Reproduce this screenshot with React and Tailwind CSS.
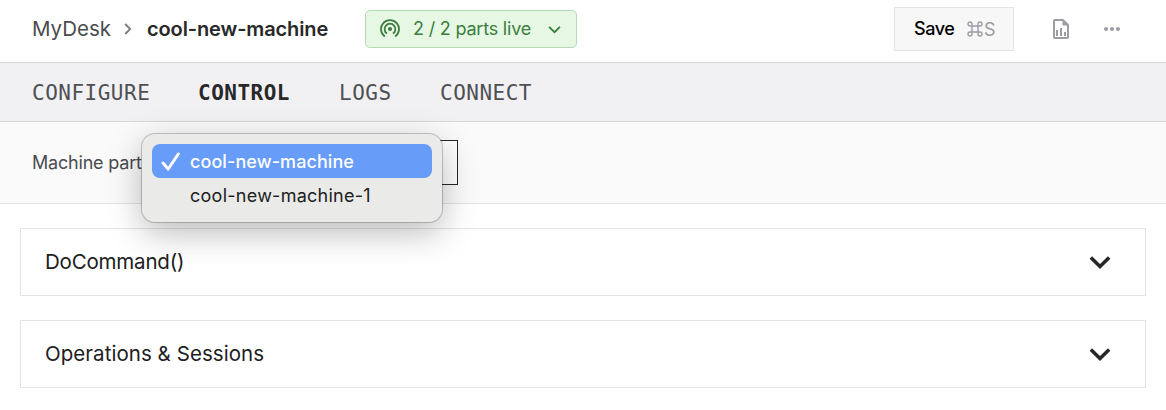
import React from "react";

function Chevron({ className, stroke = 2 }) {
  return (
    <svg className={className} viewBox="0 0 24 24" fill="none" stroke="currentColor" strokeWidth={stroke}>
      <path d="M2 7l10 10 10-10" />
    </svg>
  );
}

function Panel({ title, spacing }) {
  return (
    <section className="flex h-[68px] items-center justify-between border border-[#e4e4e6] pr-[34px] pl-6">
      <h2 className={"text-[20.5px] leading-6 whitespace-nowrap text-[#202021] " + spacing}>{title}</h2>
      <Chevron className="h-[22px] w-[22px] text-[#282829]" stroke={3.8} />
    </section>
  );
}

export default function App() {
  return (
    <div className="h-[410px] w-[1166px] overflow-hidden bg-white font-['Inter',sans-serif]">
      <header className="flex h-[63px] items-start border-b border-[#d7d7d9] pl-8">
        <div className="flex h-[58px] items-center">
          <span className="w-[92px] text-[20.5px] leading-6 text-[#4a4b4e]">MyDesk</span>
          <svg className="h-3 w-2 text-[#7a7c80]" viewBox="0 0 8 12" fill="none" stroke="currentColor" strokeWidth="1.8">
            <path d="M1.2 1l5 5-5 5" />
          </svg>
          <span className="ml-[15px] w-[218px] text-xl leading-6 font-semibold tracking-[-0.12px] whitespace-nowrap text-[#282829]">cool-new-machine</span>
        </div>
        <div className="mt-[10px] flex h-[38px] w-[212px] shrink-0 items-center rounded-[5px] border border-[#b5d9b5] bg-[#e6f8e4] pl-[14px] text-[#3d7d3f]">
          <svg className="h-5 w-5" viewBox="0 0 20 20" fill="none" stroke="currentColor" strokeWidth="1.8">
            <circle cx="10" cy="10" r="2.1" fill="currentColor" stroke="none" />
            <path d="M7 14.6a5.4 5.4 0 1 1 6 0" />
            <path d="M4.8 17.4a9 9 0 1 1 10.4 0" />
          </svg>
          <span className="ml-[13px] w-[121px] text-lg leading-6 tracking-[-0.2px] whitespace-nowrap">2 / 2 parts live</span>
          <Chevron className="ml-[14px] h-[13px] w-[13px]" stroke={3.4} />
        </div>
        <button className="mt-[7px] ml-[317px] flex h-11 w-[120px] items-center border border-[#e4e4e6] bg-[#f7f7f8] pl-[19px]">
          <span className="w-[53px] text-left text-lg leading-6 font-medium tracking-[-0.4px] text-black">Save</span>
          <svg className="h-4 w-4 text-[#9c9ca4]" viewBox="0 0 16 16" fill="none" stroke="currentColor" strokeWidth="1.4">
            <path d="M5 5h6v6H5zM5 5H3a2 2 0 1 1 2-2zM11 5V3a2 2 0 1 1 2 2zM11 11h2a2 2 0 1 1-2 2zM5 11v2a2 2 0 1 1-2-2z" />
          </svg>
          <span className="ml-px pt-px text-lg leading-6 text-[#9c9ca4]">S</span>
        </button>
        <svg className="mt-[19px] ml-[39px] h-5 w-4 text-[#9c9ca4]" viewBox="0 0 16 20" fill="none" stroke="currentColor" strokeWidth="2">
          <path d="M1 2a1 1 0 0 1 1-1h8l5 5v12a1 1 0 0 1-1 1H2a1 1 0 0 1-1-1z" />
          <path d="M9.5 1v5.5H15z" fill="currentColor" stroke="none" />
          <path d="M4 17v-6M8 17V9M12 17v-4" />
        </svg>
        <svg className="mt-[27px] ml-[35px] h-1 w-4 text-[#9c9ca4]" viewBox="0 0 16 4" fill="currentColor">
          <circle cx="2" cy="2" r="2" />
          <circle cx="8" cy="2" r="2" />
          <circle cx="14" cy="2" r="2" />
        </svg>
      </header>

      <nav className="flex h-[59px] items-center border-b border-[#d7d7d9] bg-[#f1f1f4] pt-px pl-8 font-['DejaVu_Sans_Mono',monospace] text-[21px] leading-6 tracking-[0.5px] text-[#4e4f52]">
        <a className="w-[166px]">CONFIGURE</a>
        <a className="w-[141px] font-bold text-[#282829]">CONTROL</a>
        <a className="w-[101px]">LOGS</a>
        <a>CONNECT</a>
      </nav>

      <div className="relative flex h-[82px] items-center border-b border-[#e4e4e6] bg-[#fafafa] pl-8">
        <label className="w-[125px] text-lg leading-6 tracking-[-0.2px] whitespace-nowrap text-[#4a4b4e]">Machine part</label>
        <div className="h-[45px] w-[301px] border border-[#282829] bg-white" />
        <div className="absolute top-3 left-[142px] z-10 h-[88px] w-[300px] rounded-[13px] bg-[#eaeae8] px-[10px] pt-[10px] text-lg text-[#202020] shadow-[0_0_0_1px_rgba(0,0,0,0.2),0_10px_34px_rgba(0,0,0,0.28)]">
          <div className="flex h-[34px] items-center rounded-[8px] bg-[#679cf8] pl-[9px] font-medium tracking-[0.08px] text-white">
            <svg className="h-5 w-5" viewBox="0 0 20 20" fill="none" stroke="currentColor" strokeWidth="3" strokeLinecap="round" strokeLinejoin="round">
              <path d="M2 12l5.2 6L17.3 3" />
            </svg>
            <span className="ml-[9px] pt-0.5 whitespace-nowrap">cool-new-machine</span>
          </div>
          <div className="flex h-[34px] items-center pt-0.5 pl-[38px] tracking-[0.26px] whitespace-nowrap">cool-new-machine-1</div>
        </div>
      </div>

      <main className="flex flex-col gap-6 px-5 pt-6">
        <Panel title="DoCommand()" spacing="tracking-[-0.2px]" />
        <Panel title="Operations & Sessions" spacing="tracking-[0.05px]" />
      </main>
    </div>
  );
}
